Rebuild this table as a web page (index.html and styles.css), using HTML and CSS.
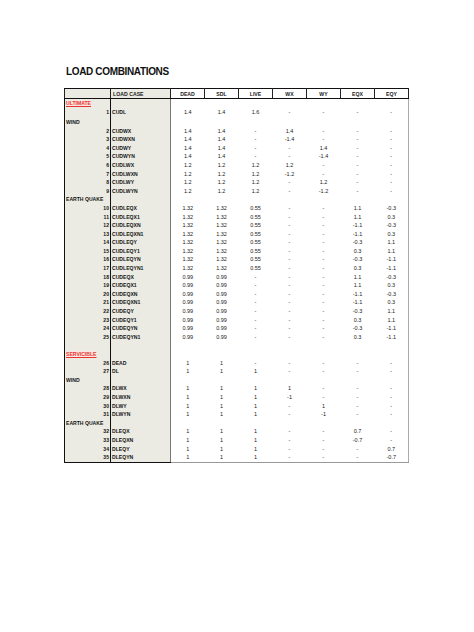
FILE: index.html
```html
<!DOCTYPE html>
<html>
<head>
<meta charset="utf-8">
<link rel="stylesheet" href="styles.css">
</head>
<body>
<div class="page">
<h1 class="title">LOAD COMBINATIONS</h1>
<table class="lc">
<colgroup><col class="w1"><col class="w2"><col class="wv"><col class="wv"><col class="wv"><col class="wv"><col class="wv"><col class="wv"><col class="wv"></colgroup>
<thead>
<tr><th class="h1"></th><th class="h2">LOAD CASE</th><th>DEAD</th><th>SDL</th><th>LIVE</th><th>WX</th><th>WY</th><th>EQX</th><th>EQY</th></tr>
</thead>
<tbody>
<tr><td class="n"><span class="red">ULTIMATE</span></td><td class="c"></td><td></td><td></td><td></td><td></td><td></td><td></td><td class="r"></td></tr>
<tr class="tall"><td class="n">1</td><td class="c">CUDL</td><td>1.4</td><td>1.4</td><td>1.6</td><td>-</td><td>-</td><td>-</td><td class="r">-</td></tr>
<tr><td class="n sec">WIND</td><td class="c"></td><td></td><td></td><td></td><td></td><td></td><td></td><td class="r"></td></tr>
<tr><td class="n">2</td><td class="c">CUDWX</td><td>1.4</td><td>1.4</td><td>-</td><td>1.4</td><td>-</td><td>-</td><td class="r">-</td></tr>
<tr><td class="n">3</td><td class="c">CUDWXN</td><td>1.4</td><td>1.4</td><td>-</td><td>-1.4</td><td>-</td><td>-</td><td class="r">-</td></tr>
<tr><td class="n">4</td><td class="c">CUDWY</td><td>1.4</td><td>1.4</td><td>-</td><td>-</td><td>1.4</td><td>-</td><td class="r">-</td></tr>
<tr><td class="n">5</td><td class="c">CUDWYN</td><td>1.4</td><td>1.4</td><td>-</td><td>-</td><td>-1.4</td><td>-</td><td class="r">-</td></tr>
<tr><td class="n">6</td><td class="c">CUDLWX</td><td>1.2</td><td>1.2</td><td>1.2</td><td>1.2</td><td>-</td><td>-</td><td class="r">-</td></tr>
<tr><td class="n">7</td><td class="c">CUDLWXN</td><td>1.2</td><td>1.2</td><td>1.2</td><td>-1.2</td><td>-</td><td>-</td><td class="r">-</td></tr>
<tr><td class="n">8</td><td class="c">CUDLWY</td><td>1.2</td><td>1.2</td><td>1.2</td><td>-</td><td>1.2</td><td>-</td><td class="r">-</td></tr>
<tr><td class="n">9</td><td class="c">CUDLWYN</td><td>1.2</td><td>1.2</td><td>1.2</td><td>-</td><td>-1.2</td><td>-</td><td class="r">-</td></tr>
<tr><td class="n sec">EARTH QUAKE</td><td class="c"></td><td></td><td></td><td></td><td></td><td></td><td></td><td class="r"></td></tr>
<tr><td class="n">10</td><td class="c">CUDLEQX</td><td>1.32</td><td>1.32</td><td>0.55</td><td>-</td><td>-</td><td>1.1</td><td class="r">-0.3</td></tr>
<tr><td class="n">11</td><td class="c">CUDLEQX1</td><td>1.32</td><td>1.32</td><td>0.55</td><td>-</td><td>-</td><td>1.1</td><td class="r">0.3</td></tr>
<tr><td class="n">12</td><td class="c">CUDLEQXN</td><td>1.32</td><td>1.32</td><td>0.55</td><td>-</td><td>-</td><td>-1.1</td><td class="r">-0.3</td></tr>
<tr><td class="n">13</td><td class="c">CUDLEQXN1</td><td>1.32</td><td>1.32</td><td>0.55</td><td>-</td><td>-</td><td>-1.1</td><td class="r">0.3</td></tr>
<tr><td class="n">14</td><td class="c">CUDLEQY</td><td>1.32</td><td>1.32</td><td>0.55</td><td>-</td><td>-</td><td>-0.3</td><td class="r">1.1</td></tr>
<tr><td class="n">15</td><td class="c">CUDLEQY1</td><td>1.32</td><td>1.32</td><td>0.55</td><td>-</td><td>-</td><td>0.3</td><td class="r">1.1</td></tr>
<tr><td class="n">16</td><td class="c">CUDLEQYN</td><td>1.32</td><td>1.32</td><td>0.55</td><td>-</td><td>-</td><td>-0.3</td><td class="r">-1.1</td></tr>
<tr><td class="n">17</td><td class="c">CUDLEQYN1</td><td>1.32</td><td>1.32</td><td>0.55</td><td>-</td><td>-</td><td>0.3</td><td class="r">-1.1</td></tr>
<tr><td class="n">18</td><td class="c">CUDEQX</td><td>0.99</td><td>0.99</td><td>-</td><td>-</td><td>-</td><td>1.1</td><td class="r">-0.3</td></tr>
<tr><td class="n">19</td><td class="c">CUDEQX1</td><td>0.99</td><td>0.99</td><td>-</td><td>-</td><td>-</td><td>1.1</td><td class="r">0.3</td></tr>
<tr><td class="n">20</td><td class="c">CUDEQXN</td><td>0.99</td><td>0.99</td><td>-</td><td>-</td><td>-</td><td>-1.1</td><td class="r">-0.3</td></tr>
<tr><td class="n">21</td><td class="c">CUDEQXN1</td><td>0.99</td><td>0.99</td><td>-</td><td>-</td><td>-</td><td>-1.1</td><td class="r">0.3</td></tr>
<tr><td class="n">22</td><td class="c">CUDEQY</td><td>0.99</td><td>0.99</td><td>-</td><td>-</td><td>-</td><td>-0.3</td><td class="r">1.1</td></tr>
<tr><td class="n">23</td><td class="c">CUDEQY1</td><td>0.99</td><td>0.99</td><td>-</td><td>-</td><td>-</td><td>0.3</td><td class="r">1.1</td></tr>
<tr><td class="n">24</td><td class="c">CUDEQYN</td><td>0.99</td><td>0.99</td><td>-</td><td>-</td><td>-</td><td>-0.3</td><td class="r">-1.1</td></tr>
<tr><td class="n">25</td><td class="c">CUDEQYN1</td><td>0.99</td><td>0.99</td><td>-</td><td>-</td><td>-</td><td>0.3</td><td class="r">-1.1</td></tr>
<tr><td class="n"></td><td class="c"></td><td></td><td></td><td></td><td></td><td></td><td></td><td class="r"></td></tr>
<tr><td class="n"><span class="red">SERVICIBLE</span></td><td class="c"></td><td></td><td></td><td></td><td></td><td></td><td></td><td class="r"></td></tr>
<tr><td class="n">26</td><td class="c">DEAD</td><td>1</td><td>1</td><td>-</td><td>-</td><td>-</td><td>-</td><td class="r">-</td></tr>
<tr><td class="n">27</td><td class="c">DL</td><td>1</td><td>1</td><td>1</td><td>-</td><td>-</td><td>-</td><td class="r">-</td></tr>
<tr><td class="n sec">WIND</td><td class="c"></td><td></td><td></td><td></td><td></td><td></td><td></td><td class="r"></td></tr>
<tr><td class="n">28</td><td class="c">DLWX</td><td>1</td><td>1</td><td>1</td><td>1</td><td>-</td><td>-</td><td class="r">-</td></tr>
<tr><td class="n">29</td><td class="c">DLWXN</td><td>1</td><td>1</td><td>1</td><td>-1</td><td>-</td><td>-</td><td class="r">-</td></tr>
<tr><td class="n">30</td><td class="c">DLWY</td><td>1</td><td>1</td><td>1</td><td>-</td><td>1</td><td>-</td><td class="r">-</td></tr>
<tr><td class="n">31</td><td class="c">DLWYN</td><td>1</td><td>1</td><td>1</td><td>-</td><td>-1</td><td>-</td><td class="r">-</td></tr>
<tr><td class="n sec">EARTH QUAKE</td><td class="c"></td><td></td><td></td><td></td><td></td><td></td><td></td><td class="r"></td></tr>
<tr><td class="n">32</td><td class="c">DLEQX</td><td>1</td><td>1</td><td>1</td><td>-</td><td>-</td><td>0.7</td><td class="r">-</td></tr>
<tr><td class="n">33</td><td class="c">DLEQXN</td><td>1</td><td>1</td><td>1</td><td>-</td><td>-</td><td>-0.7</td><td class="r">-</td></tr>
<tr><td class="n">34</td><td class="c">DLEQY</td><td>1</td><td>1</td><td>1</td><td>-</td><td>-</td><td>-</td><td class="r">0.7</td></tr>
<tr class="last"><td class="n">35</td><td class="c">DLEQYN</td><td>1</td><td>1</td><td>1</td><td>-</td><td>-</td><td>-</td><td class="r">-0.7</td></tr>
</tbody>
</table>
</div>
</body>
</html>
```

FILE: styles.css
```css
html, body {
  margin: 0;
  padding: 0;
  background: #ffffff;
}
.page {
  padding: 66px 0 0 64px;
  font-family: "Liberation Sans", Arial, sans-serif;
  color: #222;
}
.title {
  margin: 0 0 10px 2px;
  font-size: 10px;
  line-height: 12px;
  font-weight: bold;
  letter-spacing: -0.35px;
  color: #111;
}
.lc {
  border-collapse: collapse;
  table-layout: fixed;
  width: 343px;
  border-left: 1px solid #111;
  border-right: 1px solid #aaa;
}
.w1 { width: 46px; }
.w2 { width: 60px; }
.wv { width: 34px; }
.lc th {
  height: 9px;
  padding: 0;
  font-size: 5.2px;
  line-height: 8px;
  font-weight: bold;
  color: #1a1a1a;
  text-align: center;
  border-top: 1px solid #111;
  border-bottom: 1px solid #111;
  border-left: 1.5px solid #222;
  border-right: 1.5px solid #222;
  background: #fff;
}
.lc th.h1, .lc th.h2 {
  background: #ebebe3;
}
.lc th.h2 {
  text-align: left;
  padding-left: 2px;
}
.lc td {
  height: 8.6px;
  padding: 0;
  font-size: 5.5px;
  line-height: 8.6px;
  text-align: center;
  color: #1a1a1a;
  white-space: nowrap;
  overflow: visible;
}
.lc tr.tall td {
  height: 10.4px;
}
.lc td.n {
  background: #ebebe3;
  text-align: right;
  font-weight: bold;
  font-size: 5.1px;
  color: #141414;
  padding-right: 1px;
  border-right: 1.5px solid #111;
}
.lc td.n.sec, .lc td.n:has(.red) {
  text-align: left;
  padding-left: 1px;
}
.lc td.c {
  background: #ebebe3;
  text-align: left;
  font-weight: bold;
  font-size: 5.1px;
  color: #141414;
  padding-left: 1px;
  border-right: 1px solid #777;
}
.red {
  color: #e8342c;
  text-decoration: underline;
  background: #fbe6e4;
}
.lc tr.last td {
  border-bottom: 1px solid #999;
}
.lc tr.last td.n, .lc tr.last td.c {
  border-bottom: 1.5px solid #111;
}
```
